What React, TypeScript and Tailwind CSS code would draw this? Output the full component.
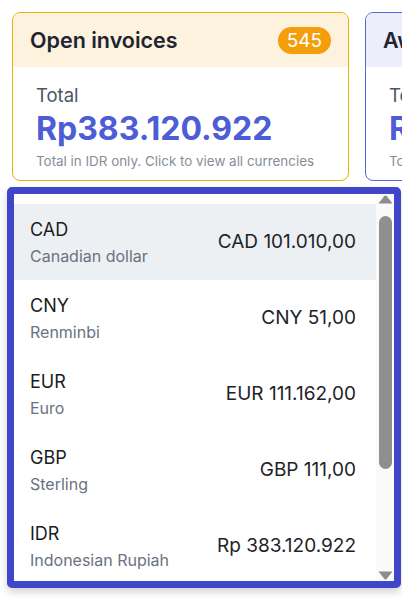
import { ReactNode } from 'react';

const currencies = [
  { code: 'CAD', name: 'Canadian dollar', amount: 'CAD 101.010,00' },
  { code: 'CNY', name: 'Renminbi', amount: 'CNY 51,00' },
  { code: 'EUR', name: 'Euro', amount: 'EUR 111.162,00' },
  { code: 'GBP', name: 'Sterling', amount: 'GBP 111,00' },
  { code: 'IDR', name: 'Indonesian Rupiah', amount: 'Rp 383.120.922' },
  { code: 'USD', name: 'US dollar', amount: 'USD 12.400,00' },
];

interface CardProps {
  title: string;
  badge?: string;
  amount: string;
  border: string;
  header: string;
  children?: ReactNode;
}

function SummaryCard({ title, badge, amount, border, header }: CardProps) {
  return (
    <div className={`w-[337px] shrink-0 h-[169px] rounded-lg border bg-white overflow-hidden ${border}`}>
      {/* Card header */}
      <div className={`h-[54px] px-[17px] flex items-center justify-between ${header}`}>
        <h2 className="text-[21.5px] font-semibold text-[#1f2430] whitespace-nowrap">{title}</h2>
        {badge && (
          <span className="h-[27px] px-[9px] rounded-full bg-[#f59e0b] text-white text-[19px] leading-[27px]">
            {badge}
          </span>
        )}
      </div>

      {/* Card body */}
      <div className="px-[23px] pt-4">
        <div className="text-[18.5px] leading-6 text-[#4b5563]">Total</div>
        <div className="text-[32px] leading-[44px] font-bold text-[#4c5dd6] whitespace-nowrap">{amount}</div>
        <div className="mt-0.5 text-[13.4px] leading-4 text-[#878d98] whitespace-nowrap">
          Total in IDR only. Click to view all currencies
        </div>
      </div>
    </div>
  );
}

function Arrow({ down }: { down?: boolean }) {
  return (
    <svg width="15" height="9" viewBox="0 0 15 9" className="block">
      {down ? (
        <path d="M0.5 0.5 H14.5 L8.8 7.8 Q7.5 9 6.2 7.8 Z" fill="#8c8c8c" />
      ) : (
        <path d="M0.5 8.5 H14.5 L8.8 1.2 Q7.5 0 6.2 1.2 Z" fill="#8c8c8c" />
      )}
    </svg>
  );
}

export default function App() {
  return (
    <div className="relative w-[402px] h-[599px] bg-white overflow-hidden" style={{ fontFamily: 'Inter, "Noto Sans", sans-serif' }}>
      {/* Summary cards */}
      <div className="flex gap-4 p-3">
        <SummaryCard
          title="Open invoices"
          badge="545"
          amount="Rp383.120.922"
          border="border-[#e3b00c]"
          header="bg-[#fcf2de]"
        />
        <SummaryCard
          title="Awaiting payment"
          amount="Rp120.500.000"
          border="border-[#5666d9]"
          header="bg-[#eceefc]"
        />
      </div>

      {/* Currency dropdown */}
      <div className="absolute left-[7px] top-[187px] w-[394px] h-[401px] border-[7px] border-[#4046c9] rounded-[5px] bg-white shadow-[0_4px_8px_rgba(0,0,0,0.18)] flex">
        <div className="flex-1 overflow-hidden pt-[10px]">
          {currencies.map((c, i) => (
            <div
              key={c.code}
              className={`h-[76px] flex items-center justify-between pl-4 pr-5 ${i === 0 ? 'bg-[#edf0f3]' : ''}`}
            >
              <div>
                <div className="text-[18px] leading-6 text-[#1a1d23]">{c.code}</div>
                <div className="mt-1 text-[16px] leading-5 text-[#6b7280]">{c.name}</div>
              </div>
              <div className="text-[19px] text-[#1f2328] whitespace-nowrap">{c.amount}</div>
            </div>
          ))}
        </div>

        {/* Scrollbar */}
        <div className="w-[18px] flex flex-col items-center bg-[#fafafa]">
          <div className="pt-px">
            <Arrow />
          </div>
          <div className="mt-[12px] w-[13px] h-[253px] rounded-full bg-[#8f8f8f]" />
          <div className="flex-1" />
          <div className="pb-px">
            <Arrow down />
          </div>
        </div>
      </div>
    </div>
  );
}
